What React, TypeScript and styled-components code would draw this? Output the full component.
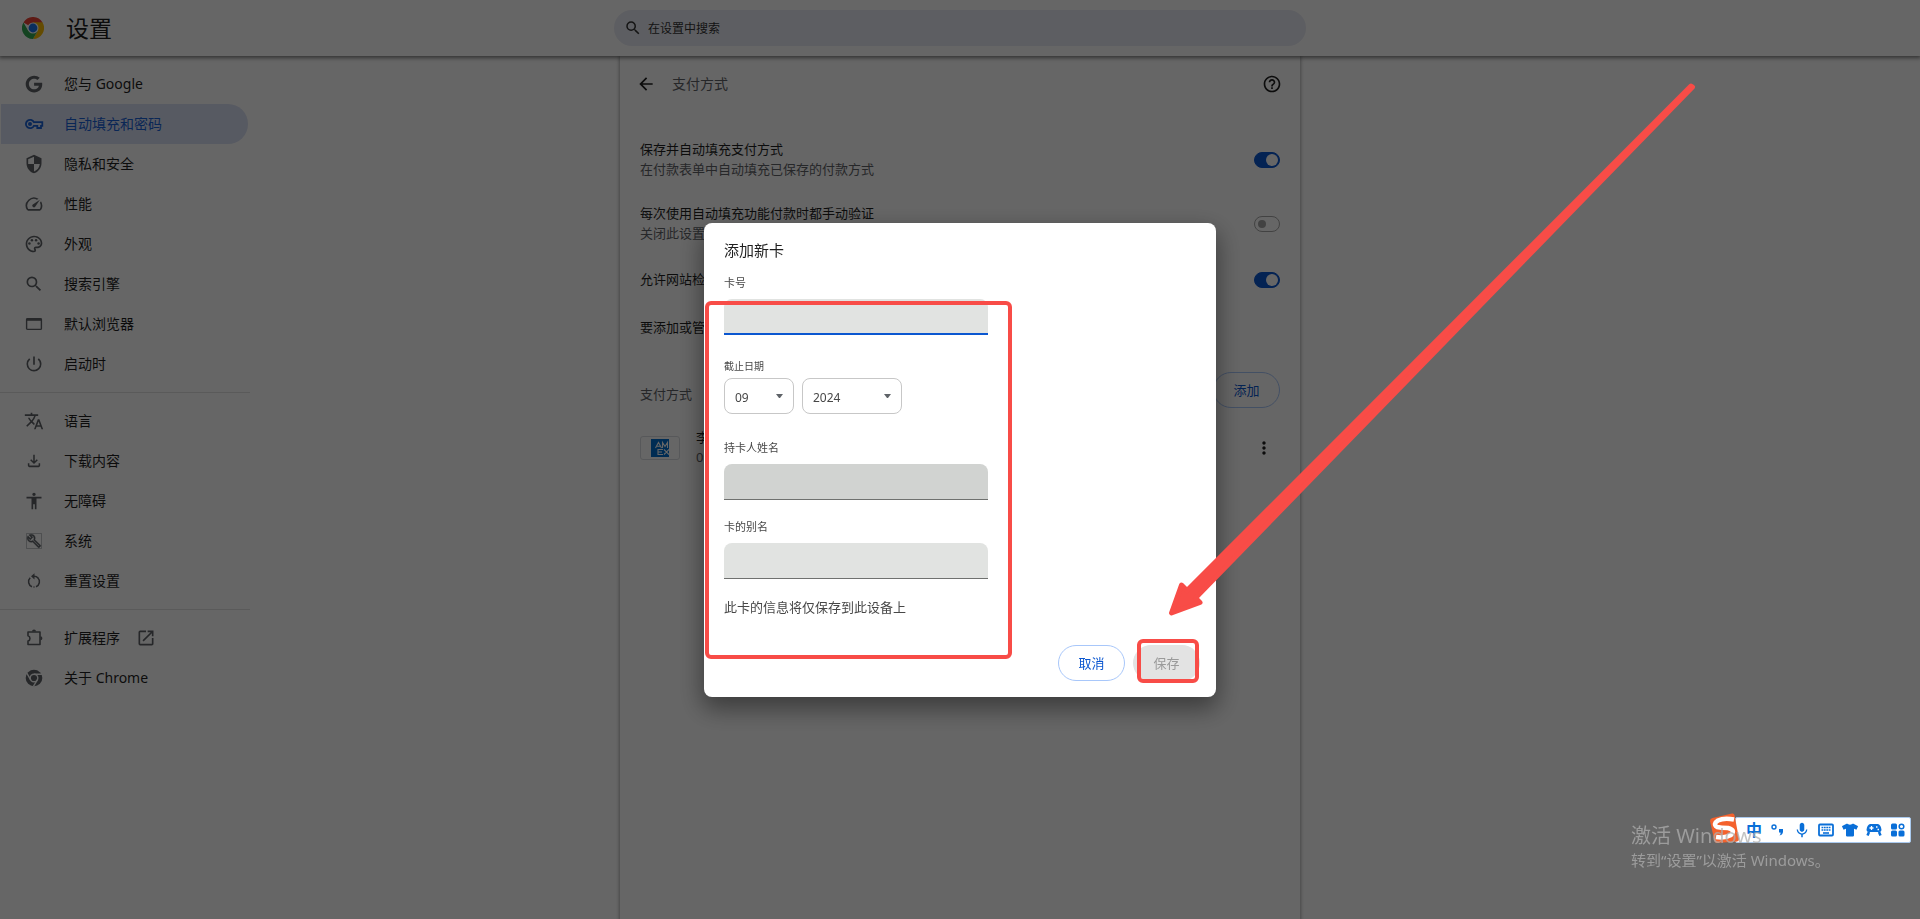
import React from "react";
import styled, { createGlobalStyle, css } from "styled-components";
import {
  MdSecurity, MdSpeed, MdOutlinePalette, MdSearch, MdPowerSettingsNew,
  MdTranslate, MdOutlineFileDownload, MdAccessibility, MdOutlineBuild,
  MdOpenInNew, MdArrowBack, MdHelpOutline, MdMoreVert, MdMic,
} from "react-icons/md";
import { FaGoogle, FaTshirt } from "react-icons/fa";

const Global = createGlobalStyle`
  * { box-sizing: border-box; }
  html, body { margin: 0; height: 100%; overflow: hidden; background: #fff; }
  #root { height: 100%; }
  body, button, input, select {
    font-family: "Noto Sans", "Noto Sans CJK SC", sans-serif;
    font-size: 13px;
    color: #1f1f1f;
  }
  h1, h2, p { margin: 0; font-weight: 400; }
`;

const Page = styled.div`
  height: 100vh;
  display: flex;
  flex-direction: column;
  overflow: hidden;
`;
const Header = styled.header`
  flex: none;
  height: 56px;
  display: grid;
  grid-template-columns: 1fr minmax(0, 692px) 1fr;
  align-items: center;
  background: #fff;
  z-index: 1;
  box-shadow: 0 1px 4px 1px rgba(0, 0, 0, 0.5);
`;
const Brand = styled.div`
  display: flex;
  align-items: center;
  gap: 22px;
  padding-left: 22px;
`;
const Title = styled.h1`
  font-size: 23px;
  line-height: 32px;
`;
const Search = styled.label`
  height: 36px;
  display: flex;
  align-items: center;
  gap: 6px;
  padding: 0 10px;
  border-radius: 18px;
  background: #e9ebf4;
  color: #333;
  svg { width: 18px; height: 18px; }
  input {
    flex: 1;
    border: 0;
    padding: 0;
    outline: 0;
    background: none;
    font-size: 12px;
    &::placeholder { color: #333; opacity: 1; }
  }
`;
const Body = styled.div`
  flex: 1;
  min-height: 0;
  display: grid;
  grid-template-columns: 1fr minmax(0, 680px) 1fr;
`;
const Nav = styled.nav`
  padding-top: 8px;
  width: 250px;
`;
const NavLink = styled.a<{ $active?: boolean }>`
  height: 40px;
  margin: 0 2px 0 1px;
  padding-left: 23px;
  display: flex;
  align-items: center;
  border-radius: 0 20px 20px 0;
  font-size: 14px;
  line-height: 20px;
  text-decoration: none;
  color: #1f1f1f;
  > svg { width: 20px; height: 20px; color: #5f6368; }
  > span { margin: 0 16px 0 20px; }
  ${(p) => p.$active && css`
    background: #dae1f4;
    color: #1a62d6;
    > svg { color: #1a62d6; }
  `}
`;
const NavRule = styled.hr`
  margin: 8px 0;
  border: 0;
  height: 1px;
  background: #e2e2e2;
`;
const Card = styled.main`
  background: #fff;
  box-shadow: 0 1px 3px 1px rgba(60, 64, 67, 0.4);
`;
const CardHead = styled.div`
  height: 56px;
  padding: 0 18px 0 16px;
  display: flex;
  align-items: center;
  gap: 16px;
  > svg { width: 20px; height: 20px; }
`;
const CardTitle = styled.h2`
  flex: 1;
  font-size: 14px;
  line-height: 20px;
  color: #5f6368;
`;
const Row = styled.div<{ $h: number }>`
  height: ${(p) => p.$h}px;
  padding: 0 20px;
  display: flex;
  align-items: center;
  gap: 16px;
`;
const Rows = styled.div`
  padding-top: 16px;
`;
const RowText = styled.div<{ $low?: boolean }>`
  flex: 1;
  min-width: 0;
  padding: ${(p) => (p.$low ? "8px 0 0" : "0 0 2px")};
  line-height: 20px;
  white-space: nowrap;
  overflow: hidden;
`;
const Muted = styled.p`
  color: #5f6368;
`;
const Switch = styled.input`
  appearance: none;
  flex: none;
  margin: 0;
  width: 26px;
  height: 16px;
  padding: 3px;
  border: 1px solid #a6a6a6;
  border-radius: 8px;
  display: flex;
  &::before {
    content: "";
    width: 8px;
    height: 8px;
    border-radius: 50%;
    background: #a6a6a6;
  }
  &:checked {
    background: #0b57d0;
    border-color: #0b57d0;
    justify-content: flex-end;
    padding: 1px;
  }
  &:checked::before { width: 12px; height: 12px; background: #fff; }
`;
const Button = styled.button`
  flex: none;
  height: 36px;
  min-width: 67px;
  padding: 0 0 2px;
  border: 1px solid #a8c7fa;
  border-radius: 18px;
  background: #fff;
  color: #0b57d0;
  &:disabled {
    border-color: #e3e3e3;
    background: #e3e3e3;
    color: #9a9a9a;
  }
`;
const Brandmark = styled.span`
  width: 40px;
  height: 24px;
  display: flex;
  justify-content: center;
  align-items: center;
  border: 1px solid #dadce0;
  border-radius: 3px;
`;
const MenuButton = styled.button`
  border: 0;
  padding: 0;
  width: 20px;
  height: 20px;
  margin-right: 6px;
  background: none;
  svg { width: 20px; height: 20px; display: block; }
`;

const Scrim = styled.div`
  position: fixed;
  inset: 0;
  z-index: 2;
  display: flex;
  justify-content: center;
  align-items: center;
  background: rgba(0, 0, 0, 0.6);
`;
const Dialog = styled.form`
  position: relative;
  width: 512px;
  padding: 15px 16px 16px 20px;
  margin-top: 1px;
  border-radius: 8px;
  background: #fff;
  box-shadow: 0 10px 24px 2px rgba(0, 0, 0, 0.42);
`;
const DialogTitle = styled.h2`
  font-size: 15px;
  line-height: 24px;
`;
const Field = styled.div<{ $top: number }>`
  width: 264px;
  padding-top: ${(p) => p.$top}px;
  label {
    display: block;
    font-size: 11px;
    line-height: 16px;
    color: #474747;
  }
`;
const TextInput = styled.input<{ $focus?: boolean; $dark?: boolean }>`
  display: block;
  width: 100%;
  height: 36px;
  margin-top: 8px;
  padding: 0 10px;
  outline: 0;
  border: 0;
  border-bottom: ${(p) => (p.$focus ? "2px solid #0b57d0" : "1px solid #6f716f")};
  border-radius: ${(p) => (p.$focus ? "8px 8px 0 0" : "8px 8px 0 0")};
  background: ${(p) => (p.$dark ? "#d1d3d1" : "#e1e3e1")};
`;
const Expiry = styled.div`
  padding-top: 23px;
`;
const Caption = styled.span`
  display: block;
  font-size: 10px;
  line-height: 16px;
  color: #474747;
`;
const Selects = styled.div`
  display: flex;
  gap: 8px;
  margin-top: 4px;
`;
const Picker = styled.div<{ $w: number }>`
  display: grid;
  width: ${(p) => p.$w}px;
  height: 36px;
  align-items: center;
  > * { grid-area: 1 / 1; }
  > svg { justify-self: end; margin-right: 11px; pointer-events: none; }
  select {
    appearance: none;
    width: 100%;
    height: 100%;
    padding: 2px 10px 0;
    border: 1px solid #c7c7c7;
    border-radius: 8px;
    background: #fff;
    font-size: 12px;
    color: #474747;
  }
`;
const Note = styled.p`
  padding-top: 18px;
  line-height: 20px;
  color: #474747;
`;
const Actions = styled.div`
  display: flex;
  justify-content: flex-end;
  gap: 8px;
  padding-top: 28px;
`;
const Mark = styled.div<{ $x: number; $y: number; $w: number; $h: number }>`
  position: absolute;
  left: ${(p) => p.$x}px;
  top: ${(p) => p.$y}px;
  width: ${(p) => p.$w}px;
  height: ${(p) => p.$h}px;
  border: 4px solid #f84c47;
  border-radius: 6px;
  pointer-events: none;
`;
const Arrow = styled.svg`
  position: absolute;
  left: 464px;
  top: -142px;
  overflow: visible;
  pointer-events: none;
`;

const Desktop = styled.aside`
  position: fixed;
  right: 9px;
  bottom: 49px;
  z-index: 3;
  width: 280px;
`;
const Watermark = styled.div`
  position: relative;
  color: rgba(175, 175, 175, 0.75);
  font-size: 15px;
  line-height: 20px;
  strong { display: block; font-weight: 400; font-size: 20px; line-height: 28px; }
`;
const Ime = styled.div`
  position: absolute;
  right: 0;
  top: -5px;
  width: 176px;
  height: 26px;
  padding: 0 4px 0 10px;
  display: flex;
  align-items: center;
  justify-content: space-between;
  background: #fff;
  border: 1px solid #a9c9ee;
  border-radius: 2px;
  color: #0a6fd8;
  > svg { width: 16px; height: 16px; }
`;
const ImeText = styled.b`
  font-size: 16px;
  line-height: 20px;
`;
const SogouLogo = styled.svg`
  position: absolute;
  right: 171px;
  top: -10px;
`;

const KeyIcon = () => (
  <svg viewBox="0 0 20 20" fill="none" stroke="currentColor" strokeWidth="1.8">
    <path d="M9.9 8.2A4.2 4.2 0 1 0 9.9 11.8H13.3V14H17V11.8H18.3V8.2Z" />
    <circle cx="6" cy="10" r="2" fill="currentColor" stroke="none" />
  </svg>
);
const WindowIcon = () => (
  <svg viewBox="0 0 20 20" fill="none" stroke="currentColor">
    <rect x="2.600" y="4.600" width="14.800" height="10.800" rx="1" strokeWidth="1.400" />
    <path d="M2.500 5.500H17.500" strokeWidth="2.600" />
  </svg>
);
const ResetIcon = () => (
  <svg viewBox="0 0 20 20" fill="none" stroke="currentColor" strokeWidth="1.500">
    <path d="M8 15.700A5.400 5.400 0 0 1 6.200 6.800M13.800 6.800A5.400 5.400 0 0 1 12 15.700" />
    <path d="M9.500 16H10.500M9 5.300Q12.500 5 14 7" />
    <path d="M10.500 2.200V8.400L7 5.300Z" fill="currentColor" stroke="none" />
  </svg>
);
const ExtensionIcon = () => (
  <svg viewBox="0 0 20 20" fill="none" stroke="currentColor" strokeWidth="1.6">
    <path d="M4 4H16V16.5H4V13C6.6 12.4 6.6 8.4 4 7.8Z" strokeLinejoin="round" />
    <path d="M8 3.6A2 2 0 0 1 12 3.6ZM16.4 8.2A2 2 0 0 1 16.4 12.2Z" fill="currentColor" stroke="none" />
  </svg>
);
const ChromeMono = () => (
  <svg viewBox="0 0 20 20">
    <circle cx="10" cy="10" r="8.3" fill="currentColor" />
    <circle cx="10" cy="10" r="3.8" fill="none" stroke="#fff" strokeWidth="1.4" />
    <path d="M10 6.2H18M6.7 11.9L2.8 5.2M13.3 11.9L9.4 18.4" stroke="#fff" strokeWidth="1.4" />
  </svg>
);
const ChromeLogo = () => (
  <svg width="22" height="22" viewBox="0 0 48 48">
    <path d="M24 24L3.2 12A24 24 0 0 1 44.8 12Z" fill="#ea4335" />
    <path d="M24 12H44.8A24 24 0 0 1 24 48L34.4 30Z" fill="#fbbc04" />
    <path d="M34.4 30L24 48A24 24 0 0 1 3.2 12L13.6 30Z" fill="#34a853" />
    <path d="M24 12H44.8L34 24Z" fill="#fbbc04" />
    <circle cx="24" cy="24" r="12" fill="#fff" />
    <circle cx="24" cy="24" r="9.6" fill="#1a73e8" />
  </svg>
);
const Amex = () => (
  <svg width="18" height="18" viewBox="0 0 18 18">
    <rect width="18" height="18" fill="#016fd0" />
    <g fill="none" stroke="#fff" strokeWidth="1.1">
      <path d="M4.500 9L7.500 3.500L10.500 9M6 7.200H9.500M11.500 9V3.500L14 7.500L16.500 3.500V9" />
      <path d="M12 10.500H7V15.500H12M7 13H11M13 10.500L18 15.500M18 10.500L13 15.500" />
    </g>
  </svg>
);
const Caret = () => (
  <svg width="7" height="5" viewBox="0 0 7 5"><path d="M0 0H7L4 4H3Z" fill="#5f6368" /></svg>
);

const groups: { label: string; icon: React.ReactNode; active?: boolean; external?: boolean }[][] = [
  [
    { label: "您与 Google", icon: <FaGoogle viewBox="-50 -40 590 590" /> },
    { label: "自动填充和密码", icon: <KeyIcon />, active: true },
    { label: "隐私和安全", icon: <MdSecurity /> },
    { label: "性能", icon: <MdSpeed /> },
    { label: "外观", icon: <MdOutlinePalette /> },
    { label: "搜索引擎", icon: <MdSearch /> },
    { label: "默认浏览器", icon: <WindowIcon /> },
    { label: "启动时", icon: <MdPowerSettingsNew /> },
  ],
  [
    { label: "语言", icon: <MdTranslate /> },
    { label: "下载内容", icon: <MdOutlineFileDownload viewBox="-1 -1 26 26" /> },
    { label: "无障碍", icon: <MdAccessibility /> },
    { label: "系统", icon: <MdOutlineBuild viewBox="-4 -4 32 32" stroke="currentColor" strokeWidth="0.600" /> },
    { label: "重置设置", icon: <ResetIcon /> },
  ],
  [
    { label: "扩展程序", icon: <ExtensionIcon />, external: true },
    { label: "关于 Chrome", icon: <ChromeMono /> },
  ],
];

export default function App() {
  return (
    <>
      <Global />
      <Page>
        <Header>
          <Brand><ChromeLogo /><Title>设置</Title></Brand>
          <Search><MdSearch /><input type="search" placeholder="在设置中搜索" aria-label="在设置中搜索" /></Search>
        </Header>
        <Body>
          <Nav>
            {groups.map((group, i) => (
              <React.Fragment key={i}>
                {i > 0 && <NavRule />}
                {group.map((item) => (
                  <NavLink key={item.label} href="#" $active={item.active}>
                    {item.icon}
                    <span>{item.label}</span>
                    {item.external && <MdOpenInNew />}
                  </NavLink>
                ))}
              </React.Fragment>
            ))}
          </Nav>
          <Card>
            <CardHead><MdArrowBack /><CardTitle>支付方式</CardTitle><MdHelpOutline /></CardHead>
            <Rows>
              <Row $h={64}>
                <RowText><label htmlFor="save">保存并自动填充支付方式</label><Muted>在付款表单中自动填充已保存的付款方式</Muted></RowText>
                <Switch id="save" type="checkbox" defaultChecked />
              </Row>
              <Row $h={64}>
                <RowText><label htmlFor="verify">每次使用自动填充功能付款时都手动验证</label><Muted>关闭此设置</Muted></RowText>
                <Switch id="verify" type="checkbox" />
              </Row>
              <Row $h={48}>
                <RowText><label htmlFor="check">允许网站检</label></RowText>
                <Switch id="check" type="checkbox" defaultChecked />
              </Row>
              <Row $h={48}><RowText>要添加或管</RowText></Row>
              <Row $h={76}>
                <RowText $low><Muted>支付方式</Muted></RowText>
                <Button type="button">添加</Button>
              </Row>
              <Row $h={40}>
                <Brandmark><Amex /></Brandmark>
                <RowText>李<Muted>09</Muted></RowText>
                <MenuButton aria-label="更多操作"><MdMoreVert /></MenuButton>
              </Row>
            </Rows>
          </Card>
        </Body>
      </Page>

      <Scrim>
        <Dialog onSubmit={(e) => e.preventDefault()} role="dialog" aria-labelledby="dialog-title">
          <DialogTitle id="dialog-title">添加新卡</DialogTitle>
          <Field $top={13}>
            <label htmlFor="number">卡号</label>
            <TextInput id="number" $focus />
          </Field>
          <Expiry role="group" aria-labelledby="expiry">
            <Caption id="expiry">截止日期</Caption>
            <Selects>
              <Picker $w={70}><select aria-label="月份"><option>09</option></select><Caret /></Picker>
              <Picker $w={100}><select aria-label="年份"><option>2024</option></select><Caret /></Picker>
            </Selects>
          </Expiry>
          <Field $top={26}>
            <label htmlFor="holder">持卡人姓名</label>
            <TextInput id="holder" $dark />
          </Field>
          <Field $top={19}>
            <label htmlFor="alias">卡的别名</label>
            <TextInput id="alias" />
          </Field>
          <Note>此卡的信息将仅保存到此设备上</Note>
          <Actions>
            <Button type="button">取消</Button>
            <Button type="submit" disabled>保存</Button>
          </Actions>
          <Mark $x={1} $y={78} $w={307} $h={358} />
          <Mark $x={433} $y={416} $w={62} $h={44} />
          <Arrow width="530" height="538" viewBox="1168 81 530 538">
            <path
              d="M1171.500 613L1181.500 585L1187 590.500L1691 86L1692.500 87L1195.500 598L1200 602.500Z"
              fill="#f84c47" stroke="#f84c47" strokeWidth="5" strokeLinejoin="round"
            />
          </Arrow>
        </Dialog>
      </Scrim>

      <Desktop>
        <Ime>
          <ImeText>中</ImeText>
          <svg viewBox="0 0 16 16"><circle cx="4" cy="5" r="2" fill="none" stroke="currentColor" strokeWidth="1.4" /><path d="M9 7H13V10Q12.500 13 9.500 13.500Q11 12 10.500 10.500H9Z" fill="currentColor" /></svg>
          <MdMic viewBox="3 1 18 21" />
          <svg viewBox="0 0 16 16" fill="none" stroke="currentColor"><rect x="1" y="2.500" width="14" height="11" rx="1" strokeWidth="1.8" /><path d="M3.500 5.500H12.500M3.500 8H12.500" strokeWidth="1.6" strokeDasharray="1.800 0.600" /><path d="M5 11H11" strokeWidth="1.6" /></svg>
          <FaTshirt />
          <svg viewBox="0 0 16 16" fill="currentColor"><path d="M4 2H12Q15 3 15.500 8Q15.500 10 13 10H3Q.5 10 .5 8Q1 3 4 2Z" /><path d="M3 10L1.500 13.500M13 10L14.500 13.500" stroke="currentColor" strokeWidth="2.500" /><path d="M3.500 6H7.500M5.500 4V8M10 5H11.500M11.500 7.500H13" stroke="#fff" strokeWidth="1.3" /></svg>
          <svg viewBox="0 0 16 16" fill="currentColor"><rect x="1" y="1.500" width="6" height="6" rx="1.500" /><rect x="1" y="8.500" width="6" height="6" rx="1.500" /><rect x="8.500" y="8.500" width="6" height="6" rx="1.500" /><circle cx="11.500" cy="4.500" r="2.300" fill="none" stroke="currentColor" strokeWidth="1.500" /></svg>
        </Ime>
        <SogouLogo width="32" height="32" viewBox="0 0 32 32">
          <path d="M4.500 6L24 1.500Q26 1 26.500 3L31 27Q31 29 29 29.500L9 31Q7 31 6.500 29L2 9Q2 6.500 4.500 6Z" fill="#f4622d" />
          <path d="M26 7.500Q16 5.500 10 8.500Q4.500 12 9 15Q13 16 20 16Q28 18 23 23Q17 26.500 8 25" fill="none" stroke="#fff" strokeWidth="4.500" />
        </SogouLogo>
        <Watermark><strong>激活 Windows</strong>转到“设置”以激活 Windows。</Watermark>
      </Desktop>
    </>
  );
}
